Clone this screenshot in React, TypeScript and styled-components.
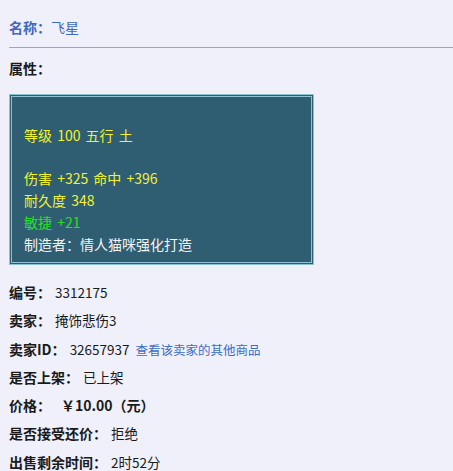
import styled, { createGlobalStyle } from "styled-components";

const GlobalStyle = createGlobalStyle`
  html, body {
    margin: 0;
    padding: 0;
    background: #eff0fa;
  }
  body {
    font-family: "Noto Sans CJK SC", "DejaVu Sans", sans-serif;
    color: #1a1a1a;
    overflow: hidden;
  }
`;

const Page = styled.div`
  width: 453px;
  height: 471px;
  overflow: hidden;
  padding-top: 17px;
  box-sizing: border-box;
`;

const NameRow = styled.div`
  padding-left: 9px;
  height: 20px;
  line-height: 20px;
  font-size: 14px;
  color: #4168bd;
`;

const NameLabel = styled.span`
  font-weight: bold;
`;

const Divider = styled.div`
  margin: 10px 0 0 9px;
  height: 1px;
  background: #a3a3b3;
`;

const SectionTitle = styled.div`
  padding-left: 9px;
  margin-top: 10px;
  height: 20px;
  line-height: 20px;
  font-size: 14px;
  font-weight: bold;
`;

const AttrBox = styled.div`
  margin: 16px 0 0 9px;
  width: 305px;
  height: 171px;
  box-sizing: border-box;
  border: 3px double #8ec3d3;
  background: #2f5e72;
  padding: 6px 0 0 12px;
`;

const AttrLine = styled.div<{ tone: "yellow" | "green" | "white" }>`
  height: 21.8px;
  line-height: 21.8px;
  font-size: 14px;
  word-spacing: 2px;
  white-space: pre;
  color: ${(p) =>
    p.tone === "yellow" ? "#f2f230" : p.tone === "green" ? "#26e026" : "#f4f4f4"};
`;

const InfoList = styled.div`
  margin-top: 13px;
  padding-left: 9px;
`;

const InfoRow = styled.div`
  height: 28.3px;
  line-height: 28.3px;
  font-size: 14px;
  white-space: nowrap;
`;

const Label = styled.span`
  font-weight: bold;
`;

const Value = styled.span<{ strong?: boolean }>`
  margin-left: ${(p) => (p.strong ? "10px" : "4px")};
  font-weight: ${(p) => (p.strong ? "bold" : "normal")};
  font-size: ${(p) => (p.strong ? "14px" : "13.5px")};
`;

const SellerLink = styled.a`
  margin-left: 6px;
  font-size: 12.5px;
  color: #3e6ec0;
  text-decoration: none;
`;

const attrs: { text: string; tone: "yellow" | "green" | "white" }[] = [
  { text: "", tone: "yellow" },
  { text: "等级 100 五行 土", tone: "yellow" },
  { text: "", tone: "yellow" },
  { text: "伤害 +325 命中 +396", tone: "yellow" },
  { text: "耐久度 348", tone: "yellow" },
  { text: "敏捷 +21", tone: "green" },
  { text: "制造者：情人猫咪强化打造", tone: "white" },
];

export default function App() {
  return (
    <Page>
      <GlobalStyle />
      <NameRow>
        <NameLabel>名称：</NameLabel>飞星
      </NameRow>
      <Divider />
      <SectionTitle>属性：</SectionTitle>
      <AttrBox>
        {attrs.map((a, i) => (
          <AttrLine key={i} tone={a.tone}>
            {a.text}
          </AttrLine>
        ))}
      </AttrBox>
      <InfoList>
        <InfoRow>
          <Label>编号：</Label>
          <Value>3312175</Value>
        </InfoRow>
        <InfoRow>
          <Label>卖家：</Label>
          <Value>掩饰悲伤3</Value>
        </InfoRow>
        <InfoRow>
          <Label>卖家ID：</Label>
          <Value>32657937</Value>
          <SellerLink href="#">查看该卖家的其他商品</SellerLink>
        </InfoRow>
        <InfoRow>
          <Label>是否上架：</Label>
          <Value>已上架</Value>
        </InfoRow>
        <InfoRow>
          <Label>价格：</Label>
          <Value strong>￥10.00（元）</Value>
        </InfoRow>
        <InfoRow>
          <Label>是否接受还价：</Label>
          <Value>拒绝</Value>
        </InfoRow>
        <InfoRow>
          <Label>出售剩余时间：</Label>
          <Value>2时52分</Value>
        </InfoRow>
      </InfoList>
    </Page>
  );
}
